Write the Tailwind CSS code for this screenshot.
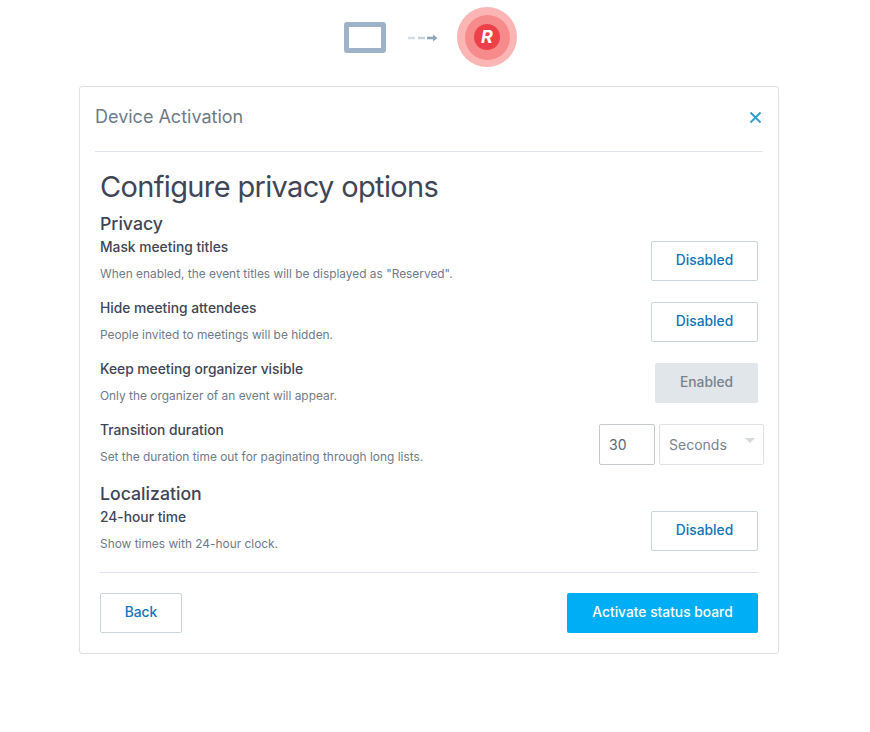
<!DOCTYPE html>
<html lang="en">
<head>
  <meta charset="UTF-8">
  <title>Device Activation</title>
  <script src="https://cdn.jsdelivr.net/npm/@tailwindcss/browser@4"></script>
</head>
<body class="bg-white font-['Inter',sans-serif] text-[#3f4657]">
  <div class="w-[870px] h-[732px] overflow-hidden">

    <div class="h-[86px] flex items-center pl-[344px] pb-[12px]">
      <div class="w-[42px] h-[31px] border-[5px] border-[#9fb3c8] rounded-[3px]"></div>
      <svg class="ml-[22px] mt-[1px]" width="30" height="10" viewBox="0 0 30 10">
        <path d="M0 5h7" stroke="#d5dde5" stroke-width="2.5"/>
        <path d="M10 5h7" stroke="#c5d1dc" stroke-width="2.5"/>
        <path d="M19 5h6" stroke="#8fa5ba" stroke-width="2.5"/>
        <path d="M25 1.5l4.5 3.5-4.5 3.5z" fill="#8fa5ba"/>
      </svg>
      <div class="ml-[19px] w-[60px] h-[60px] rounded-full bg-[#fbb5b5] flex items-center justify-center">
        <div class="w-[45px] h-[45px] rounded-full bg-[#f78a8a] flex items-center justify-center">
          <div class="w-[26px] h-[26px] rounded-full bg-[#ee4049] flex items-center justify-center text-white font-bold italic text-[18px] leading-none">R</div>
        </div>
      </div>
    </div>

    <div class="ml-[79px] w-[700px] h-[568px] border border-[#dcdfe3] rounded-[3px] px-[15px]">
      <div class="h-[65px] border-b border-[#dde3e8] flex items-center justify-between">
        <h2 class="text-[18px] text-[#6f7b8a] pb-[5px]">Device Activation</h2>
        <svg class="mr-[1px] mb-[4px]" width="13" height="13" viewBox="0 0 13 13" fill="none" stroke="#2b9fd0" stroke-width="1.8"><path d="M1.5 1.5l10 10M11.5 1.5l-10 10"/></svg>
      </div>

      <div class="px-[5px]">
        <h1 class="mt-[16px] text-[29px] leading-[38px] font-normal tracking-[-0.65px] text-[#3f4657]">Configure privacy options</h1>
        <h3 class="mt-[6px] text-[17.7px] leading-[24px] font-medium">Privacy</h3>

        <div class="flex justify-between h-[61px] pt-[1px]">
          <div>
            <div class="text-[13.8px] leading-[20px] font-medium">Mask meeting titles</div>
            <div class="text-[11.9px] leading-[16px] text-[#6f7b8a] mt-[9px]">When enabled, the event titles will be displayed as "Reserved".</div>
          </div>
          <button class="mt-[4px] w-[107px] h-[40px] pb-[2px] border border-[#c9d6e0] rounded-[2px] text-[13.8px] font-medium text-[#0f75bd]">Disabled</button>
        </div>

        <div class="flex justify-between h-[61px] pt-[1px]">
          <div>
            <div class="text-[13.8px] leading-[20px] font-medium">Hide meeting attendees</div>
            <div class="text-[11.9px] leading-[16px] text-[#6f7b8a] mt-[9px]">People invited to meetings will be hidden.</div>
          </div>
          <button class="mt-[4px] w-[107px] h-[40px] pb-[2px] border border-[#c9d6e0] rounded-[2px] text-[13.8px] font-medium text-[#0f75bd]">Disabled</button>
        </div>

        <div class="flex justify-between h-[61px] pt-[1px]">
          <div>
            <div class="text-[13.8px] leading-[20px] font-medium">Keep meeting organizer visible</div>
            <div class="text-[11.9px] leading-[16px] text-[#6f7b8a] mt-[9px]">Only the organizer of an event will appear.</div>
          </div>
          <button class="mt-[4px] w-[103px] h-[40px] pb-[2px] bg-[#e1e6eb] rounded-[2px] text-[13.8px] font-medium text-[#76838f]">Enabled</button>
        </div>

        <div class="flex justify-between h-[61px] pt-[1px]">
          <div>
            <div class="text-[13.8px] leading-[20px] font-medium">Transition duration</div>
            <div class="text-[11.9px] leading-[16px] text-[#6f7b8a] mt-[9px]">Set the duration time out for paginating through long lists.</div>
          </div>
          <div class="mt-[4px] flex gap-[4px] h-[41px] mr-[-6px]">
            <div class="w-[56px] pb-[1px] border border-[#c4c9ce] rounded-[2px] flex items-center pl-[9px] text-[14px] text-[#5d6673]">30</div>
            <div class="relative w-[105px] pb-[1px] border border-[#dfe3e7] rounded-[2px] flex items-center pl-[9px] text-[14px] text-[#7a8490]">
              Seconds
              <span class="absolute right-[8px] top-[13px] border-x-[5px] border-x-transparent border-t-[5px] border-t-[#d5dade]"></span>
            </div>
          </div>
        </div>

        <h3 class="text-[17.7px] leading-[24px] font-medium mt-[2px]">Localization</h3>
        <div class="flex justify-between h-[66px]">
          <div>
            <div class="text-[13.8px] leading-[20px] font-medium mt-[1px]">24-hour time</div>
            <div class="text-[11.9px] leading-[16px] text-[#6f7b8a] mt-[9px]">Show times with 24-hour clock.</div>
          </div>
          <button class="mt-[5px] w-[107px] h-[40px] pb-[2px] border border-[#c9d6e0] rounded-[2px] text-[13.8px] font-medium text-[#0f75bd]">Disabled</button>
        </div>

        <div class="border-t border-[#dde3e8] pt-[20px] flex justify-between">
          <button class="w-[82px] h-[40px] pb-[2px] border border-[#c9d6e0] rounded-[2px] text-[13.8px] font-medium text-[#0f75bd]">Back</button>
          <button class="w-[191px] h-[40px] pb-[2px] bg-[#00aef5] rounded-[2px] text-[13.8px] font-medium text-white">Activate status board</button>
        </div>
      </div>
    </div>
  </div>
</body>
</html>
